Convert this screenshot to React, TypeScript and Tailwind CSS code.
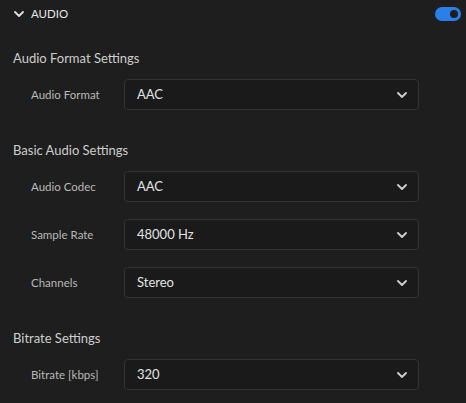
import type { ReactNode } from "react";

const SECTIONS = [
  {
    title: "Audio Format Settings",
    rows: [{ label: "Audio Format", value: "AAC" }],
  },
  {
    title: "Basic Audio Settings",
    rows: [
      { label: "Audio Codec", value: "AAC" },
      { label: "Sample Rate", value: "48000 Hz" },
      { label: "Channels", value: "Stereo" },
    ],
  },
  {
    title: "Bitrate Settings",
    rows: [{ label: "Bitrate [kbps]", value: "320" }],
  },
];

function Chevron({ className = "" }: { className?: string }) {
  return (
    <svg viewBox="0 0 10 6" className={className} fill="none">
      <path
        d="M1 1l4 4 4-4"
        stroke="currentColor"
        strokeWidth="1.8"
        strokeLinecap="round"
        strokeLinejoin="round"
      />
    </svg>
  );
}

function SelectRow({ label, value }: { label: string; value: string }) {
  return (
    <div className="flex items-center">
      <span className="w-[124px] shrink-0 pl-[31px] text-[11.5px] text-[#b9b9b9] whitespace-nowrap">
        {label}
      </span>
      <div className="flex h-[31px] w-[295px] items-center justify-between rounded-[4px] border border-[#343434] bg-[#1a1a1a] pl-[12px] pr-[11px]">
        <span className="text-[13px] text-[#e3e3e3]">{value}</span>
        <Chevron className="h-[6px] w-[10px] text-[#d0d0d0]" />
      </div>
    </div>
  );
}

function Section({ title, children }: { title: string; children: ReactNode }) {
  return (
    <section className="flex flex-col">
      <h2 className="h-[20px] pl-[13px] text-[13px] leading-[20px] text-[#cdcdcd]">
        {title}
      </h2>
      <div className="mt-[11px] flex flex-col gap-[17px]">{children}</div>
    </section>
  );
}

export default function App() {
  return (
    <div
      className="h-[403px] w-[466px] overflow-hidden bg-[#1e1e1e]"
      style={{ fontFamily: "Lato, 'Open Sans', sans-serif" }}
    >
      <div className="flex h-[28px] items-center justify-between pl-[14px] pr-[5px]">
        <div className="flex items-center">
          <Chevron className="h-[6px] w-[10px] text-[#e0e0e0]" />
          <span className="ml-[7px] text-[11.5px] text-[#e6e6e6]">AUDIO</span>
        </div>
        <div className="flex h-[14px] w-[26px] items-center justify-end rounded-full bg-[#2b7fe8] pr-[1px]">
          <div className="h-[12px] w-[12px] rounded-full border-2 border-[#2b7fe8] bg-[#1e1e1e]" />
        </div>
      </div>
      <div className="mt-[20px] flex flex-col gap-[30px]">
        {SECTIONS.map((s) => (
          <Section key={s.title} title={s.title}>
            {s.rows.map((r) => (
              <SelectRow key={r.label} label={r.label} value={r.value} />
            ))}
          </Section>
        ))}
      </div>
    </div>
  );
}
